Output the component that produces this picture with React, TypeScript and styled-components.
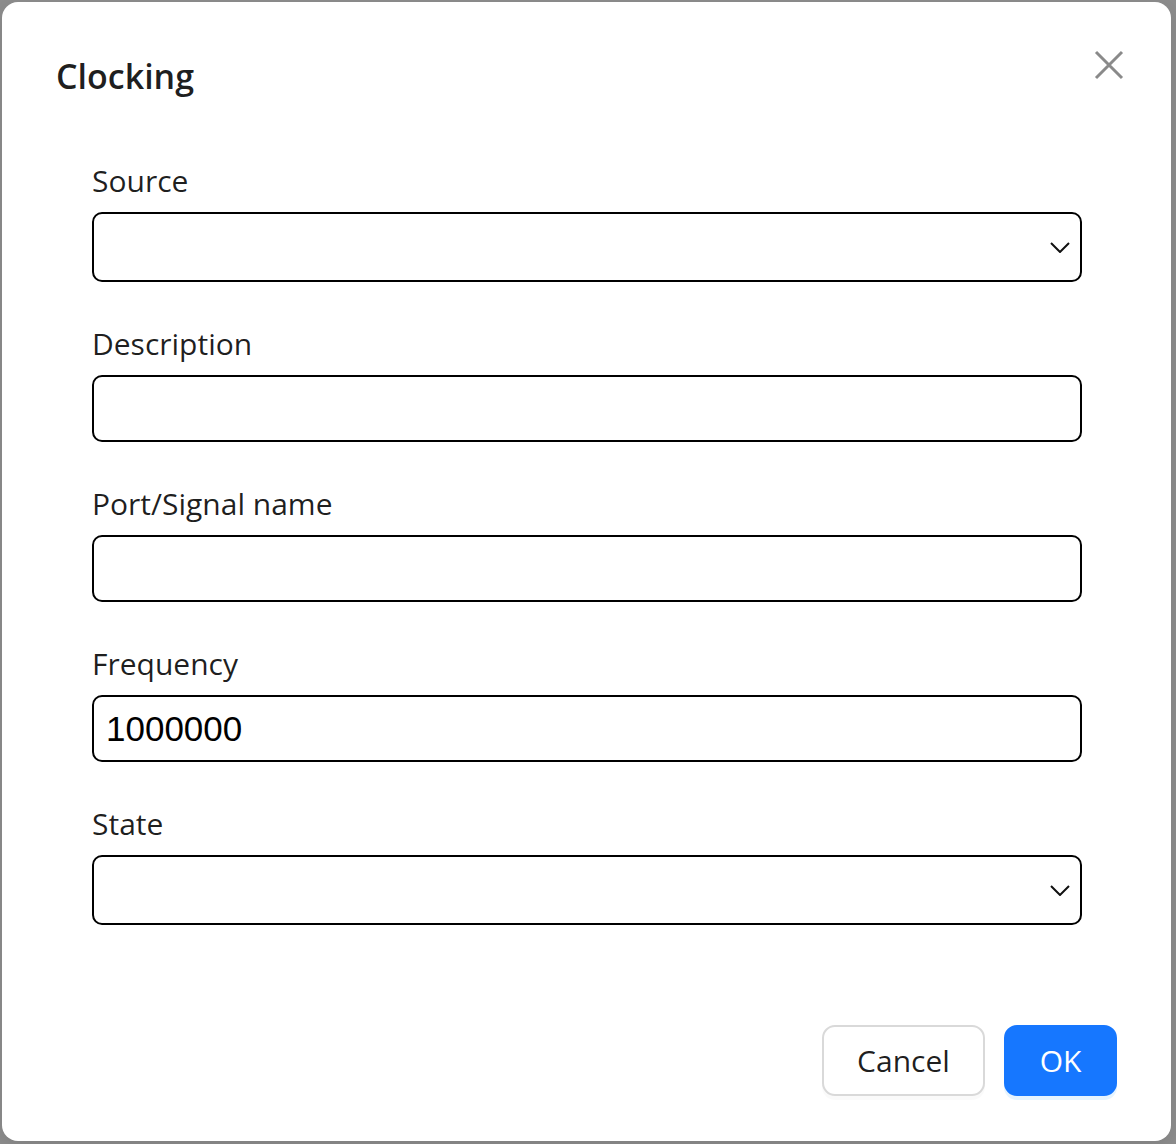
import React, { useState } from "react";
import styled, { createGlobalStyle } from "styled-components";

const GlobalStyle = createGlobalStyle`
  html, body {
    margin: 0;
    padding: 0;
  }
  body {
    font-family: "Open Sans", "Noto Sans", sans-serif;
    background: #8c8c8c;
  }
  * {
    box-sizing: border-box;
  }
`;

// Style
const Backdrop = styled.div`
  width: 1176px;
  height: 1144px;
  padding: 2px 5px 3px 2px;
  background-color: #8c8c8c;
`;

const Modal = styled.div`
  height: 100%;
  display: flex;
  flex-direction: column;
  background-color: #fff;
  border-radius: 16px;
  box-shadow: 0 6px 16px rgba(0, 0, 0, 0.08);
`;

const Header = styled.div`
  display: flex;
  align-items: flex-start;
  justify-content: space-between;
  padding: 48px 47px 0 54px;
`;

const Title = styled.h2`
  margin: 2px 0 0;
  font-size: 34px;
  line-height: 48px;
  font-weight: 600;
  color: rgba(0, 0, 0, 0.88);
`;

const CloseButton = styled.button`
  width: 30px;
  height: 30px;
  padding: 0;
  border: none;
  background: transparent;
  color: #8a8a8a;
  cursor: pointer;
  display: flex;
  svg {
    display: block;
  }
`;

const Form = styled.form`
  margin-top: 59px;
  padding: 0 89px 0 90px;
  display: flex;
  flex-direction: column;
  gap: 40px;
`;

const Field = styled.div`
  display: flex;
  flex-direction: column;
`;

const Label = styled.label`
  height: 44px;
  line-height: 44px;
  margin-bottom: 9px;
  font-size: 30px;
  color: rgba(0, 0, 0, 0.88);
`;

const TextInput = styled.input`
  height: 67px;
  width: 100%;
  padding: 0 12px;
  border: 2px solid #000;
  border-radius: 10px;
  font-family: "Liberation Sans", Arial, sans-serif;
  font-size: 35px;
  color: #000;
  background: #fff;
  outline: none;
`;

const SelectWrap = styled.div`
  position: relative;
  height: 70px;
  svg {
    position: absolute;
    right: 12px;
    top: 30px;
    pointer-events: none;
  }
`;

const Select = styled.select`
  appearance: none;
  width: 100%;
  height: 100%;
  padding: 0 40px 0 12px;
  border: 2px solid #000;
  border-radius: 10px;
  font-family: "Liberation Sans", Arial, sans-serif;
  font-size: 30px;
  background: #fff;
  outline: none;
`;

const Footer = styled.div`
  margin-top: auto;
  display: flex;
  justify-content: flex-end;
  gap: 19px;
  padding: 0 54px 45px 0;
`;

const Button = styled.button<{ $primary?: boolean }>`
  height: 71px;
  min-width: ${(props) => (props.$primary ? "113px" : "163px")};
  padding: 0 30px;
  border-radius: 13px;
  font-family: "Open Sans", "Noto Sans", sans-serif;
  font-size: 30px;
  cursor: pointer;
  border: 2px solid ${(props) => (props.$primary ? "#1677ff" : "#d9d9d9")};
  background-color: ${(props) => (props.$primary ? "#1677ff" : "#fff")};
  color: ${(props) => (props.$primary ? "#fff" : "rgba(0, 0, 0, 0.88)")};
  box-shadow: ${(props) =>
    props.$primary
      ? "0 4px 0 rgba(5, 145, 255, 0.1)"
      : "0 4px 0 rgba(0, 0, 0, 0.02)"};
`;

const Chevron = () => (
  <svg width="20" height="11" viewBox="0 0 20 11" fill="none">
    <path d="M1 1l9 9 9-9" stroke="#111" strokeWidth="2" />
  </svg>
);

function App() {
  const [source, setSource] = useState("");
  const [description, setDescription] = useState("");
  const [port, setPort] = useState("");
  const [frequency, setFrequency] = useState("1000000");
  const [state, setState] = useState("");

  return (
    <>
      <GlobalStyle />
      <Backdrop>
        <Modal>
          <Header>
            <Title>Clocking</Title>
            <CloseButton aria-label="Close">
              <svg width="30" height="30" viewBox="0 0 30 30">
                <path
                  d="M2 2l26 26M28 2L2 28"
                  stroke="currentColor"
                  strokeWidth="3"
                />
              </svg>
            </CloseButton>
          </Header>

          <Form onSubmit={(e) => e.preventDefault()}>
            <Field>
              <Label>Source</Label>
              <SelectWrap>
                <Select value={source} onChange={(e) => setSource(e.target.value)}>
                  <option value=""></option>
                </Select>
                <Chevron />
              </SelectWrap>
            </Field>
            <Field>
              <Label>Description</Label>
              <TextInput
                value={description}
                onChange={(e) => setDescription(e.target.value)}
              />
            </Field>
            <Field>
              <Label>Port/Signal name</Label>
              <TextInput value={port} onChange={(e) => setPort(e.target.value)} />
            </Field>
            <Field>
              <Label>Frequency</Label>
              <TextInput
                value={frequency}
                onChange={(e) => setFrequency(e.target.value)}
              />
            </Field>
            <Field>
              <Label>State</Label>
              <SelectWrap>
                <Select value={state} onChange={(e) => setState(e.target.value)}>
                  <option value=""></option>
                </Select>
                <Chevron />
              </SelectWrap>
            </Field>
          </Form>

          <Footer>
            <Button>Cancel</Button>
            <Button $primary>OK</Button>
          </Footer>
        </Modal>
      </Backdrop>
    </>
  );
}

export default App;
